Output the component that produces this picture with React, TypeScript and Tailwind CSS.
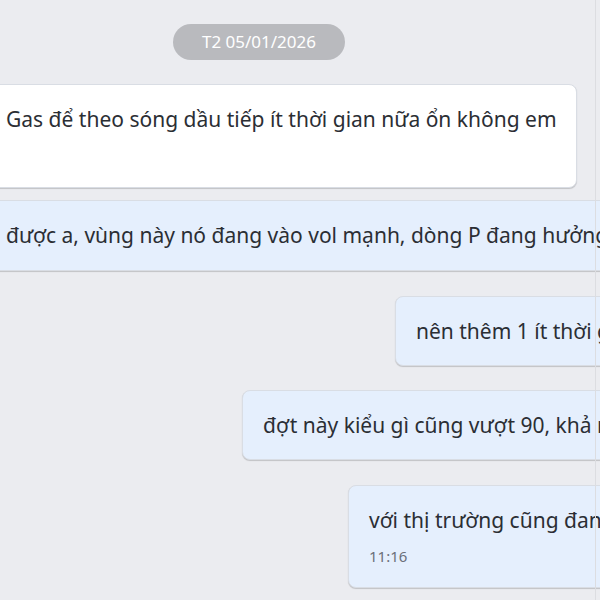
const font = { fontFamily: '"Noto Sans", "Open Sans", sans-serif' };

type Bubble = {
  text: string;
  mine: boolean;
  row: string;
  box: string;
  time?: string;
};

const bubbles: Bubble[] = [
  { text: "Gas để theo sóng dầu tiếp ít thời gian nữa ổn không em", mine: false, row: "ml-[-15px] mt-6", box: "w-[592px] h-[104px]" },
  { text: "được a, vùng này nó đang vào vol mạnh, dòng P đang hưởng lợi", mine: true, row: "ml-[-15px] mt-3", box: "h-[71px]" },
  { text: "nên thêm 1 ít thời gian nữa", mine: true, row: "ml-[395px] mt-[25px]", box: "h-[70px]" },
  { text: "đợt này kiểu gì cũng vượt 90, khả năng cao", mine: true, row: "ml-[242px] mt-6", box: "h-[70px]" },
  { text: "với thị trường cũng đang ủng hộ", mine: true, row: "ml-[348px] mt-[25px]", box: "h-[103px]", time: "11:16" },
];

export default function App() {
  return (
    <div className="relative h-[600px] w-[600px] overflow-hidden bg-[#ebecf0]" style={font}>
      <div className="flex flex-col pt-6">
        <div className="ml-[173px] flex h-9 w-[172px] items-center justify-center rounded-full bg-[#b9babe] text-[17px] text-white">
          T2 05/01/2026
        </div>
        {bubbles.map((b) => (
          <div key={b.text} className={`flex shrink-0 ${b.row}`}>
            <div
              className={`shrink-0 whitespace-nowrap rounded-lg border border-[#d9dde4] px-5 pt-[20px] text-[21px] leading-[28px] text-[#2b2e34] shadow-[0_1px_1px_rgba(0,0,0,0.18)] ${
                b.mine ? "bg-[#e5effd] pr-32" : "bg-white"
              } ${b.box}`}
            >
              <div>{b.text}</div>
              {b.time && <div className="mt-3 text-[15px] leading-[20px] text-[#6b7079]">{b.time}</div>}
            </div>
          </div>
        ))}
      </div>
      <div className="absolute right-[4px] top-0 h-full w-px bg-[#dcdde1]" />
    </div>
  );
}
